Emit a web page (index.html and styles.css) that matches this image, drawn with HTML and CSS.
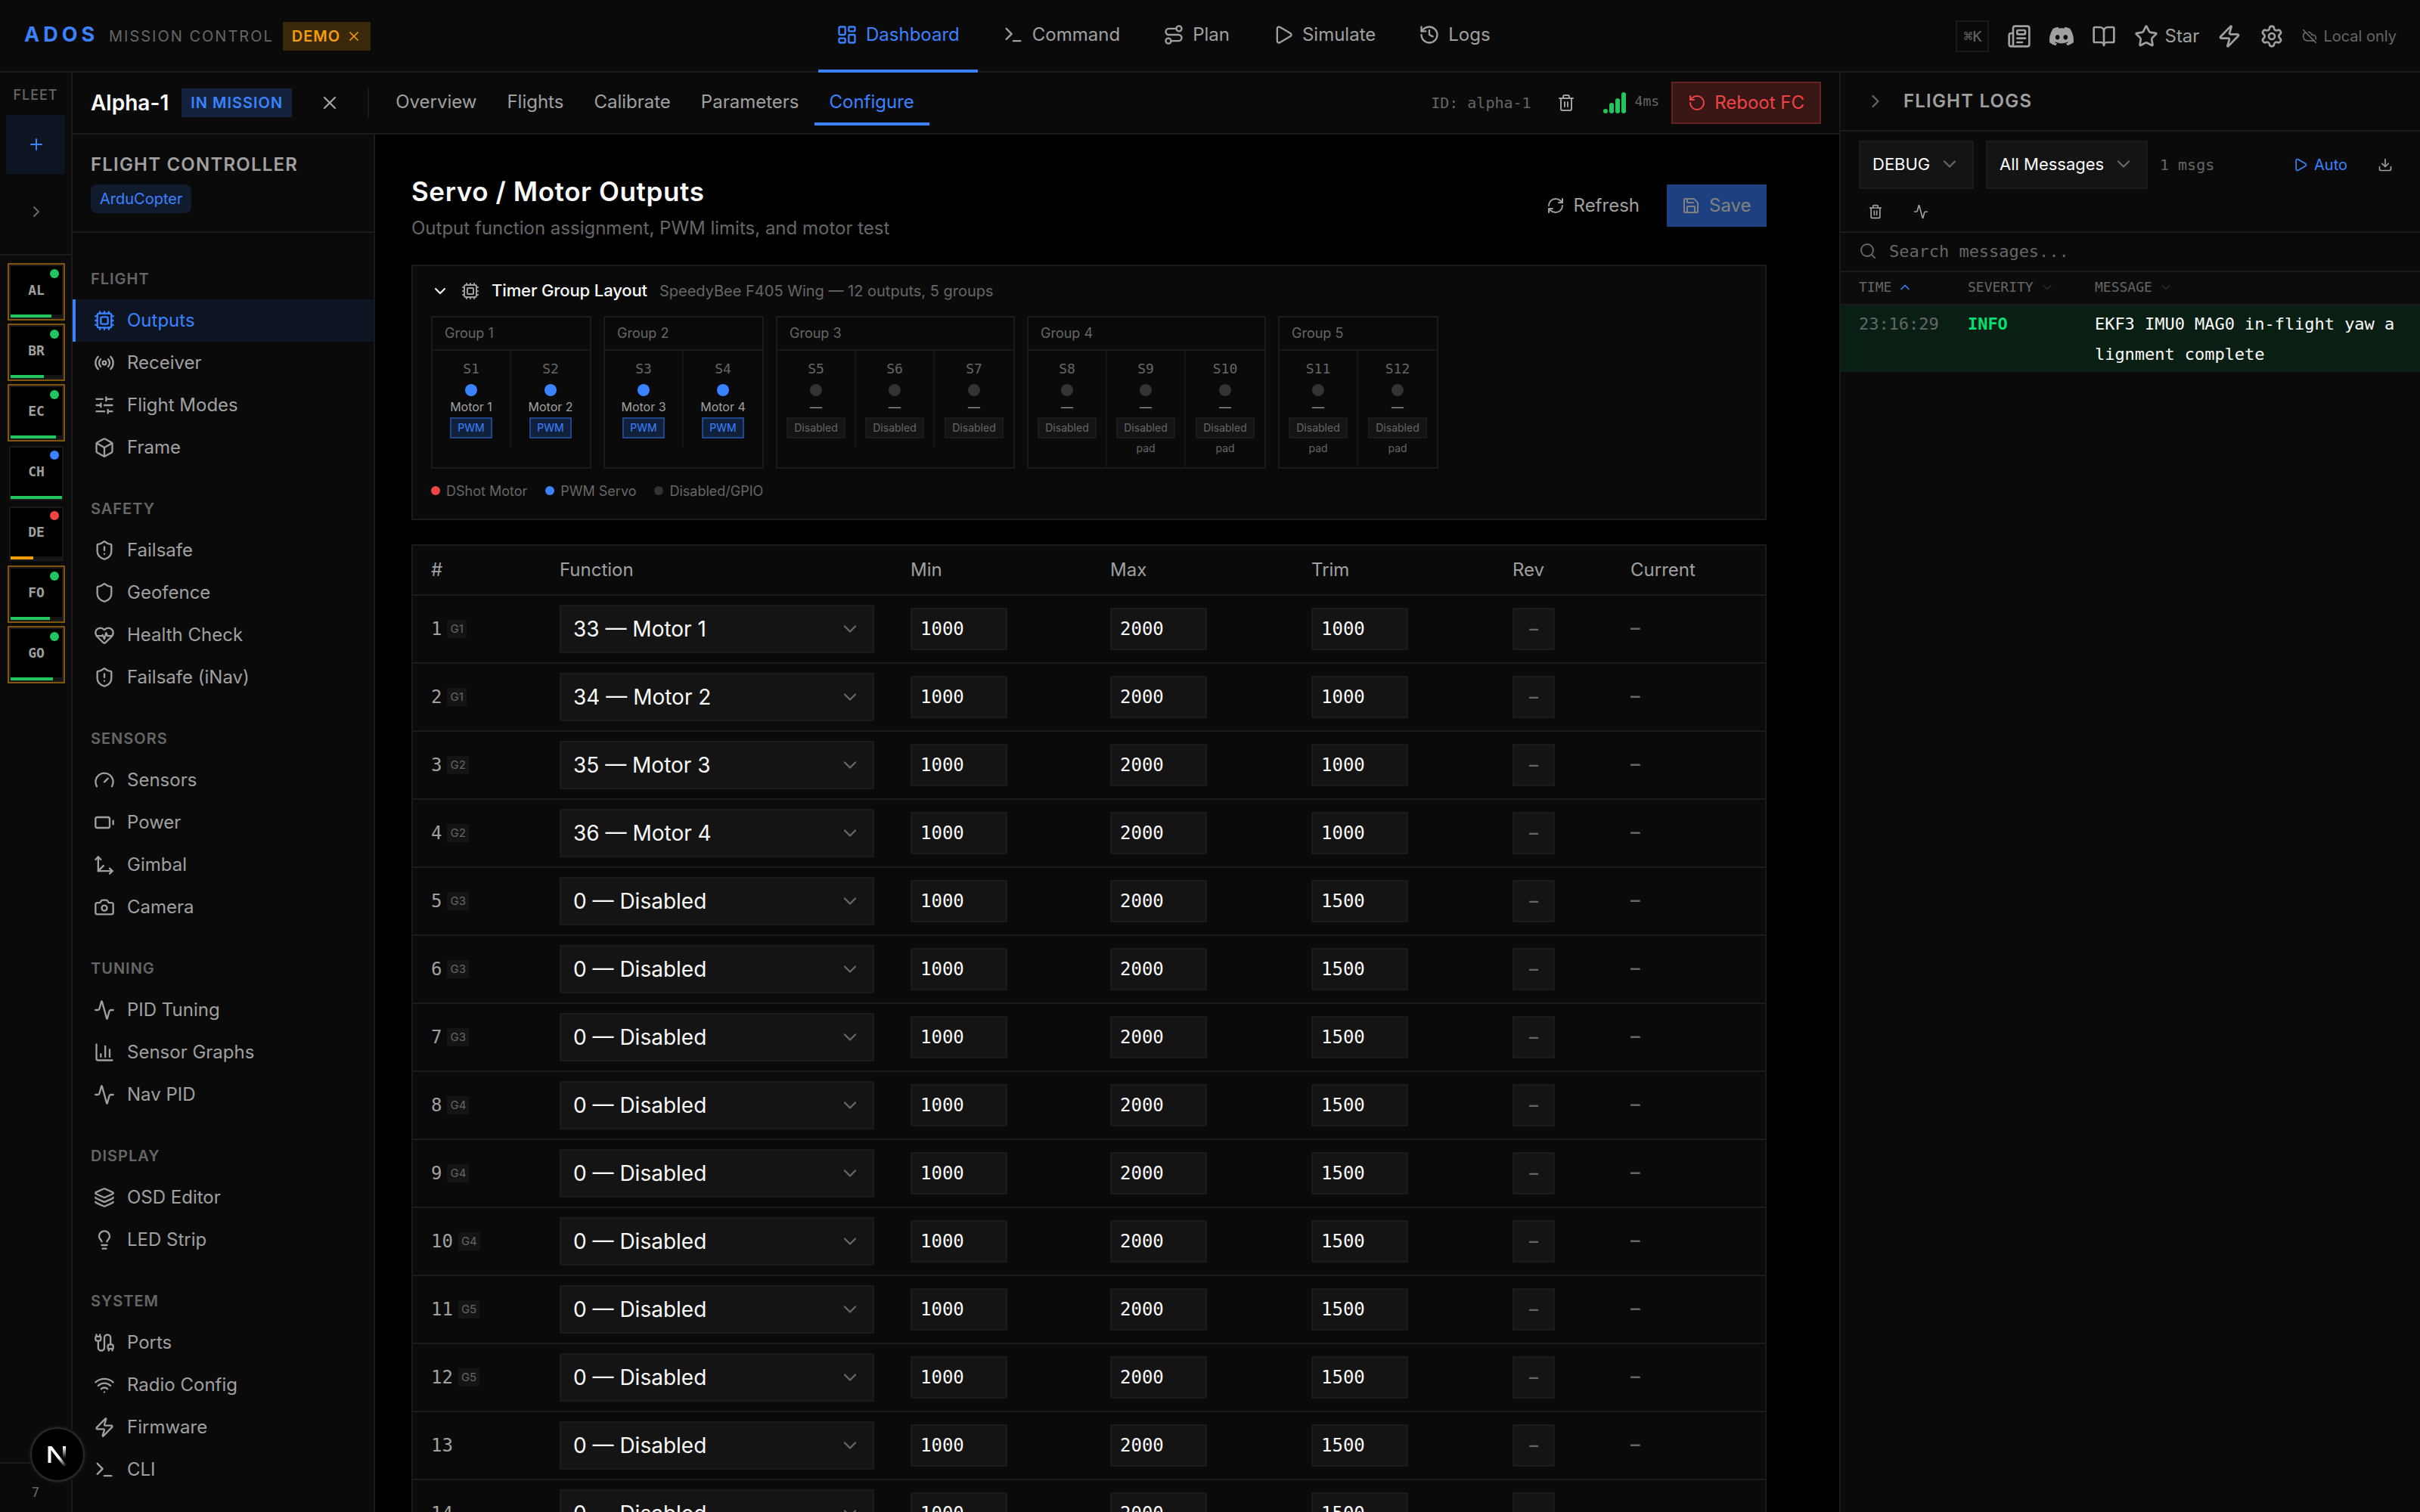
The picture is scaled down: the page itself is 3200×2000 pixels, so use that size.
FILE: index.html
```html
<!DOCTYPE html>
<html lang="en">
<head>
<meta charset="utf-8">
<title>ADOS Mission Control</title>
<link rel="stylesheet" href="styles.css">
</head>
<body>
<svg class="sprite" aria-hidden="true">
  <symbol id="dashboard" viewBox="0 0 24 24"><rect x="3" y="3" width="7" height="9" rx="1"/><rect x="14" y="3" width="7" height="5" rx="1"/><rect x="14" y="12" width="7" height="9" rx="1"/><rect x="3" y="16" width="7" height="5" rx="1"/></symbol>
  <symbol id="terminal" viewBox="0 0 24 24"><path d="m4 17 6-6-6-6"/><path d="M12 19h8"/></symbol>
  <symbol id="route" viewBox="0 0 24 24"><circle cx="6" cy="19" r="3"/><path d="M9 19h8.5a3.5 3.5 0 0 0 0-7h-11a3.5 3.5 0 0 1 0-7H15"/><circle cx="18" cy="5" r="3"/></symbol>
  <symbol id="play" viewBox="0 0 24 24"><path d="M5 5a2 2 0 0 1 3.008-1.728l11.997 6.998a2 2 0 0 1 .003 3.458l-12 7A2 2 0 0 1 5 19z"/></symbol>
  <symbol id="history" viewBox="0 0 24 24"><path d="M3 12a9 9 0 1 0 9-9 9.75 9.75 0 0 0-6.74 2.74L3 8"/><path d="M3 3v5h5"/><path d="M12 7v5l4 2"/></symbol>
  <symbol id="newspaper" viewBox="0 0 24 24"><path d="M15 18h-5"/><path d="M18 14h-8"/><path d="M4 22h16a2 2 0 0 0 2-2V4a2 2 0 0 0-2-2H8a2 2 0 0 0-2 2v16a2 2 0 0 1-4 0v-9a2 2 0 0 1 2-2h2"/><rect x="10" y="6" width="8" height="4" rx="1"/></symbol>
  <symbol id="discord" viewBox="0 0 24 24"><path d="M20.317 4.3698a19.7913 19.7913 0 00-4.8851-1.5152.0741.0741 0 00-.0785.0371c-.211.3753-.4447.8648-.6083 1.2495-1.8447-.2762-3.68-.2762-5.4868 0-.1636-.3933-.4058-.8742-.6177-1.2495a.077.077 0 00-.0785-.037 19.7363 19.7363 0 00-4.8852 1.515.0699.0699 0 00-.0321.0277C.5334 9.0458-.319 13.5799.0992 18.0578a.0824.0824 0 00.0312.0561c2.0528 1.5076 4.0413 2.4228 5.9929 3.0294a.0777.0777 0 00.0842-.0276c.4616-.6304.8731-1.2952 1.226-1.9942a.076.076 0 00-.0416-.1057c-.6528-.2476-1.2743-.5495-1.8722-.8923a.077.077 0 01-.0076-.1277c.1258-.0943.2517-.1923.3718-.2914a.0743.0743 0 01.0776-.0105c3.9278 1.7933 8.18 1.7933 12.0614 0a.0739.0739 0 01.0785.0095c.1202.099.246.1981.3728.2924a.077.077 0 01-.0066.1276 12.2986 12.2986 0 01-1.873.8914.0766.0766 0 00-.0407.1067c.3604.698.7719 1.3628 1.225 1.9932a.076.076 0 00.0842.0286c1.961-.6067 3.9495-1.5219 6.0023-3.0294a.077.077 0 00.0313-.0552c.5004-5.177-.8382-9.6739-3.5485-13.6604a.061.061 0 00-.0312-.0286zM8.02 15.3312c-1.1825 0-2.1569-1.0857-2.1569-2.419 0-1.3332.9555-2.4189 2.157-2.4189 1.2108 0 2.1757 1.0952 2.1568 2.419 0 1.3332-.9555 2.4189-2.1569 2.4189zm7.9748 0c-1.1825 0-2.1569-1.0857-2.1569-2.419 0-1.3332.9554-2.4189 2.1569-2.4189 1.2108 0 2.1757 1.0952 2.1568 2.419 0 1.3332-.946 2.4189-2.1568 2.4189Z"/></symbol>
  <symbol id="book" viewBox="0 0 24 24"><path d="M12 7v14"/><path d="M3 18a1 1 0 0 1-1-1V4a1 1 0 0 1 1-1h5a4 4 0 0 1 4 4 4 4 0 0 1 4-4h5a1 1 0 0 1 1 1v13a1 1 0 0 1-1 1h-6a3 3 0 0 0-3 3 3 3 0 0 0-3-3z"/></symbol>
  <symbol id="star" viewBox="0 0 24 24"><path d="M11.525 2.295a.53.53 0 0 1 .95 0l2.31 4.679a2.123 2.123 0 0 0 1.595 1.16l5.166.756a.53.53 0 0 1 .294.904l-3.736 3.638a2.123 2.123 0 0 0-.611 1.878l.882 5.14a.53.53 0 0 1-.771.56l-4.618-2.428a2.122 2.122 0 0 0-1.973 0L6.396 21.01a.53.53 0 0 1-.77-.56l.881-5.139a2.122 2.122 0 0 0-.611-1.879L2.16 9.795a.53.53 0 0 1 .294-.906l5.165-.755a2.122 2.122 0 0 0 1.597-1.16z"/></symbol>
  <symbol id="zap" viewBox="0 0 24 24"><path d="M4 14a1 1 0 0 1-.78-1.63l9.9-10.2a.5.5 0 0 1 .86.46l-1.92 6.02A1 1 0 0 0 13 10h7a1 1 0 0 1 .78 1.63l-9.9 10.2a.5.5 0 0 1-.86-.46l1.92-6.02A1 1 0 0 0 11 14z"/></symbol>
  <symbol id="settings" viewBox="0 0 24 24"><path d="M9.671 4.136a2.34 2.34 0 0 1 4.659 0 2.34 2.34 0 0 0 3.319 1.915 2.34 2.34 0 0 1 2.33 4.033 2.34 2.34 0 0 0 0 3.831 2.34 2.34 0 0 1-2.33 4.033 2.34 2.34 0 0 0-3.319 1.915 2.34 2.34 0 0 1-4.659 0 2.34 2.34 0 0 0-3.32-1.915 2.34 2.34 0 0 1-2.33-4.033 2.34 2.34 0 0 0 0-3.831A2.34 2.34 0 0 1 6.35 6.051a2.34 2.34 0 0 0 3.319-1.915"/><circle cx="12" cy="12" r="3"/></symbol>
  <symbol id="cloud-off" viewBox="0 0 24 24"><path d="m2 2 20 20"/><path d="M5.782 5.782A7 7 0 0 0 9 19h8.5a4.5 4.5 0 0 0 1.307-.193"/><path d="M21.532 16.5A4.5 4.5 0 0 0 17.5 10h-1.79A7.008 7.008 0 0 0 10 5.07"/></symbol>
  <symbol id="x" viewBox="0 0 24 24"><path d="M18 6 6 18"/><path d="m6 6 12 12"/></symbol>
  <symbol id="plus" viewBox="0 0 24 24"><path d="M5 12h14"/><path d="M12 5v14"/></symbol>
  <symbol id="chevron-right" viewBox="0 0 24 24"><path d="m9 18 6-6-6-6"/></symbol>
  <symbol id="chevron-down" viewBox="0 0 24 24"><path d="m6 9 6 6 6-6"/></symbol>
  <symbol id="chevron-up" viewBox="0 0 24 24"><path d="m18 15-6-6-6 6"/></symbol>
  <symbol id="cpu" viewBox="0 0 24 24"><path d="M12 20v2M12 2v2M17 20v2M17 2v2M2 12h2M2 17h2M2 7h2M20 12h2M20 17h2M20 7h2M7 20v2M7 2v2"/><rect x="4" y="4" width="16" height="16" rx="2"/><rect x="8" y="8" width="8" height="8" rx="1"/></symbol>
  <symbol id="radio" viewBox="0 0 24 24"><path d="M16.247 7.761a6 6 0 0 1 0 8.478"/><path d="M19.075 4.933a10 10 0 0 1 0 14.134"/><path d="M4.925 19.067a10 10 0 0 1 0-14.134"/><path d="M7.753 16.239a6 6 0 0 1 0-8.478"/><circle cx="12" cy="12" r="2"/></symbol>
  <symbol id="sliders" viewBox="0 0 24 24"><path d="M10 5H3M12 19H3M14 3v4M16 17v4M21 12h-9M21 19h-5M21 5h-7M8 10v4M8 12H3"/></symbol>
  <symbol id="box" viewBox="0 0 24 24"><path d="M21 8a2 2 0 0 0-1-1.73l-7-4a2 2 0 0 0-2 0l-7 4A2 2 0 0 0 3 8v8a2 2 0 0 0 1 1.73l7 4a2 2 0 0 0 2 0l7-4A2 2 0 0 0 21 16Z"/><path d="m3.3 7 8.7 5 8.7-5"/><path d="M12 22V12"/></symbol>
  <symbol id="shield" viewBox="0 0 24 24"><path d="M20 13c0 5-3.5 7.5-7.66 8.95a1 1 0 0 1-.67-.01C7.5 20.5 4 18 4 13V6a1 1 0 0 1 1-1c2 0 4.5-1.2 6.24-2.72a1.17 1.17 0 0 1 1.52 0C14.51 3.81 17 5 19 5a1 1 0 0 1 1 1z"/></symbol>
  <symbol id="shield-alert" viewBox="0 0 24 24"><path d="M20 13c0 5-3.5 7.5-7.66 8.95a1 1 0 0 1-.67-.01C7.5 20.5 4 18 4 13V6a1 1 0 0 1 1-1c2 0 4.5-1.2 6.24-2.72a1.17 1.17 0 0 1 1.52 0C14.51 3.81 17 5 19 5a1 1 0 0 1 1 1z"/><path d="M12 8v4M12 16h.01"/></symbol>
  <symbol id="heart-pulse" viewBox="0 0 24 24"><path d="M2 9.5a5.5 5.5 0 0 1 9.591-3.676.56.56 0 0 0 .818 0A5.49 5.49 0 0 1 22 9.5c0 2.29-1.5 4-3 5.5l-5.492 5.313a2 2 0 0 1-3 .019L5 15c-1.5-1.5-3-3.2-3-5.5"/><path d="M3.22 13H9.5l.5-1 2 4.5 2-7 1.5 3.5h5.27"/></symbol>
  <symbol id="gauge" viewBox="0 0 24 24"><path d="m12 14 4-4"/><path d="M3.34 19a10 10 0 1 1 17.32 0"/></symbol>
  <symbol id="battery" viewBox="0 0 24 24"><path d="M22 14v-4"/><rect x="2" y="6" width="16" height="12" rx="2"/></symbol>
  <symbol id="axes" viewBox="0 0 24 24"><path d="M5 3v16h16"/><path d="m5 19 6-6"/><path d="m2 6 3-3 3 3"/><path d="m18 16 3 3-3 3"/></symbol>
  <symbol id="camera" viewBox="0 0 24 24"><path d="M13.997 4a2 2 0 0 1 1.76 1.05l.486.9A2 2 0 0 0 18.003 7H20a2 2 0 0 1 2 2v9a2 2 0 0 1-2 2H4a2 2 0 0 1-2-2V9a2 2 0 0 1 2-2h1.997a2 2 0 0 0 1.759-1.048l.489-.904A2 2 0 0 1 10.004 4z"/><circle cx="12" cy="13" r="3"/></symbol>
  <symbol id="activity" viewBox="0 0 24 24"><path d="M22 12h-2.48a2 2 0 0 0-1.93 1.46l-2.35 8.36a.25.25 0 0 1-.48 0L9.24 2.18a.25.25 0 0 0-.48 0l-2.35 8.36A2 2 0 0 1 4.49 12H2"/></symbol>
  <symbol id="chart" viewBox="0 0 24 24"><path d="M3 3v16a2 2 0 0 0 2 2h16"/><path d="M18 17V9M13 17V5M8 17v-3"/></symbol>
  <symbol id="layers" viewBox="0 0 24 24"><path d="M12.83 2.18a2 2 0 0 0-1.66 0L2.6 6.08a1 1 0 0 0 0 1.83l8.58 3.91a2 2 0 0 0 1.66 0l8.58-3.9a1 1 0 0 0 0-1.83z"/><path d="M2 12a1 1 0 0 0 .58.91l8.6 3.91a2 2 0 0 0 1.65 0l8.58-3.9A1 1 0 0 0 22 12"/><path d="M2 17a1 1 0 0 0 .58.91l8.6 3.91a2 2 0 0 0 1.65 0l8.58-3.9A1 1 0 0 0 22 17"/></symbol>
  <symbol id="bulb" viewBox="0 0 24 24"><path d="M15 14c.2-1 .7-1.7 1.5-2.5 1-.9 1.5-2.2 1.5-3.5A6 6 0 0 0 6 8c0 1 .2 2.2 1.5 3.5.7.7 1.3 1.5 1.5 2.5"/><path d="M9 18h6M10 22h4"/></symbol>
  <symbol id="cable" viewBox="0 0 24 24"><path d="M17 19a1 1 0 0 1-1-1v-2a2 2 0 0 1 2-2h2a2 2 0 0 1 2 2v2a1 1 0 0 1-1 1z"/><path d="M17 21v-2"/><path d="M19 14V6.5a1 1 0 0 0-7 0v11a1 1 0 0 1-7 0V10"/><path d="M21 21v-2"/><path d="M3 5V3"/><path d="M4 10a2 2 0 0 1-2-2V6a1 1 0 0 1 1-1h4a1 1 0 0 1 1 1v2a2 2 0 0 1-2 2z"/><path d="M7 5V3"/></symbol>
  <symbol id="wifi" viewBox="0 0 24 24"><path d="M12 20h.01"/><path d="M2 8.82a15 15 0 0 1 20 0"/><path d="M5 12.859a10 10 0 0 1 14 0"/><path d="M8.5 16.429a5 5 0 0 1 7 0"/></symbol>
  <symbol id="rotate" viewBox="0 0 24 24"><path d="M3 12a9 9 0 1 0 9-9 9.75 9.75 0 0 0-6.74 2.74L3 8"/><path d="M3 3v5h5"/></symbol>
  <symbol id="refresh" viewBox="0 0 24 24"><path d="M3 12a9 9 0 0 1 9-9 9.75 9.75 0 0 1 6.74 2.74L21 8"/><path d="M21 3v5h-5"/><path d="M21 12a9 9 0 0 1-9 9 9.75 9.75 0 0 1-6.74-2.74L3 16"/><path d="M8 16H3v5"/></symbol>
  <symbol id="save" viewBox="0 0 24 24"><path d="M15.2 3a2 2 0 0 1 1.4.6l3.8 3.8a2 2 0 0 1 .6 1.4V19a2 2 0 0 1-2 2H5a2 2 0 0 1-2-2V5a2 2 0 0 1 2-2z"/><path d="M17 21v-7a1 1 0 0 0-1-1H8a1 1 0 0 0-1 1v7"/><path d="M7 3v4a1 1 0 0 0 1 1h7"/></symbol>
  <symbol id="trash" viewBox="0 0 24 24"><path d="M10 11v6M14 11v6"/><path d="M19 6v14a2 2 0 0 1-2 2H7a2 2 0 0 1-2-2V6"/><path d="M3 6h18"/><path d="M8 6V4a2 2 0 0 1 2-2h4a2 2 0 0 1 2 2v2"/></symbol>
  <symbol id="download" viewBox="0 0 24 24"><path d="M12 15V3"/><path d="M21 15v4a2 2 0 0 1-2 2H5a2 2 0 0 1-2-2v-4"/><path d="m7 10 5 5 5-5"/></symbol>
  <symbol id="search" viewBox="0 0 24 24"><path d="m21 21-4.34-4.34"/><circle cx="11" cy="11" r="8"/></symbol>
</svg>

<div class="app">
  <header class="topbar">
    <div class="brand">
      <span class="logo">ADOS</span>
      <span class="product">MISSION CONTROL</span>
      <span class="demo">DEMO<svg class="icon i20"><use href="#x"/></svg></span>
    </div>
    <nav class="main-nav">
      <a class="nav-item active"><svg class="icon i28"><use href="#dashboard"/></svg>Dashboard</a>
      <a class="nav-item"><svg class="icon i28"><use href="#terminal"/></svg>Command</a>
      <a class="nav-item"><svg class="icon i28"><use href="#route"/></svg>Plan</a>
      <a class="nav-item"><svg class="icon i28"><use href="#play"/></svg>Simulate</a>
      <a class="nav-item"><svg class="icon i28"><use href="#history"/></svg>Logs</a>
    </nav>
    <div class="top-actions">
      <span class="kbd">⌘K</span>
      <svg class="icon i32"><use href="#newspaper"/></svg>
      <svg class="icon i32 solid"><use href="#discord"/></svg>
      <svg class="icon i32"><use href="#book"/></svg>
      <span class="star"><svg class="icon i32"><use href="#star"/></svg>Star</span>
      <svg class="icon i32"><use href="#zap"/></svg>
      <svg class="icon i32"><use href="#settings"/></svg>
      <span class="local"><svg class="icon i20"><use href="#cloud-off"/></svg>Local only</span>
    </div>
  </header>

  <div class="workspace">
    <aside class="fleet">
      <div class="fleet-head">
        <span class="fleet-title">FLEET</span>
        <div class="fleet-add"><svg class="icon i24"><use href="#plus"/></svg></div>
        <div class="fleet-expand"><svg class="icon i24"><use href="#chevron-right"/></svg></div>
      </div>
      <div class="fleet-list">
        <div class="drone ring"><i class="dot green"></i>AL<div class="bar"><b class="green" style="width:79%"></b></div></div>
        <div class="drone ring"><i class="dot green"></i>BR<div class="bar"><b class="green" style="width:65%"></b></div></div>
        <div class="drone ring"><i class="dot green"></i>EC<div class="bar"><b class="green" style="width:88%"></b></div></div>
        <div class="drone"><i class="dot blue"></i>CH<div class="bar"><b class="green" style="width:100%"></b></div></div>
        <div class="drone"><i class="dot red"></i>DE<div class="bar"><b class="amber" style="width:44%"></b></div></div>
        <div class="drone ring"><i class="dot green"></i>FO<div class="bar"><b class="green" style="width:76%"></b></div></div>
        <div class="drone ring"><i class="dot green"></i>GO<div class="bar"><b class="green" style="width:82%"></b></div></div>
      </div>
      <div class="fleet-count">7</div>
    </aside>

    <section class="detail">
      <div class="detail-bar">
        <span class="drone-name">Alpha-1</span>
        <span class="status">IN MISSION</span>
        <svg class="icon i28 close"><use href="#x"/></svg>
        <span class="vsep"></span>
        <nav class="tabs">
          <a class="tab">Overview</a><a class="tab">Flights</a><a class="tab">Calibrate</a><a class="tab">Parameters</a><a class="tab active">Configure</a>
        </nav>
        <div class="detail-actions">
          <span class="drone-id">ID: alpha-1</span>
          <svg class="icon i24"><use href="#trash"/></svg>
          <span class="link"><span class="signal"><i class="s1"></i><i class="s2"></i><i class="s3"></i><i class="s4"></i></span><span class="ping">4ms</span></span>
          <span class="reboot"><svg class="icon i24"><use href="#rotate"/></svg>Reboot FC</span>
        </div>
      </div>

      <div class="detail-body">
        <aside class="sidebar">
          <div class="side-head">
            <div class="side-title">FLIGHT CONTROLLER</div>
            <span class="firmware">ArduCopter</span>
          </div>
          <nav class="side-nav">
            <h4>FLIGHT</h4>
            <a class="active"><svg class="icon i28"><use href="#cpu"/></svg>Outputs</a>
            <a><svg class="icon i28"><use href="#radio"/></svg>Receiver</a>
            <a><svg class="icon i28"><use href="#sliders"/></svg>Flight Modes</a>
            <a><svg class="icon i28"><use href="#box"/></svg>Frame</a>
            <h4>SAFETY</h4>
            <a><svg class="icon i28"><use href="#shield-alert"/></svg>Failsafe</a>
            <a><svg class="icon i28"><use href="#shield"/></svg>Geofence</a>
            <a><svg class="icon i28"><use href="#heart-pulse"/></svg>Health Check</a>
            <a><svg class="icon i28"><use href="#shield-alert"/></svg>Failsafe (iNav)</a>
            <h4>SENSORS</h4>
            <a><svg class="icon i28"><use href="#gauge"/></svg>Sensors</a>
            <a><svg class="icon i28"><use href="#battery"/></svg>Power</a>
            <a><svg class="icon i28"><use href="#axes"/></svg>Gimbal</a>
            <a><svg class="icon i28"><use href="#camera"/></svg>Camera</a>
            <h4>TUNING</h4>
            <a><svg class="icon i28"><use href="#activity"/></svg>PID Tuning</a>
            <a><svg class="icon i28"><use href="#chart"/></svg>Sensor Graphs</a>
            <a><svg class="icon i28"><use href="#activity"/></svg>Nav PID</a>
            <h4>DISPLAY</h4>
            <a><svg class="icon i28"><use href="#layers"/></svg>OSD Editor</a>
            <a><svg class="icon i28"><use href="#bulb"/></svg>LED Strip</a>
            <h4>SYSTEM</h4>
            <a><svg class="icon i28"><use href="#cable"/></svg>Ports</a>
            <a><svg class="icon i28"><use href="#wifi"/></svg>Radio Config</a>
            <a><svg class="icon i28"><use href="#zap"/></svg>Firmware</a>
            <a><svg class="icon i28"><use href="#terminal"/></svg>CLI</a>
          </nav>
        </aside>

        <main class="content">
          <div class="page-head">
            <div>
              <h1>Servo / Motor Outputs</h1>
              <p>Output function assignment, PWM limits, and motor test</p>
            </div>
            <div class="page-actions">
              <span class="btn"><svg class="icon i24"><use href="#refresh"/></svg>Refresh</span>
              <span class="btn primary"><svg class="icon i24"><use href="#save"/></svg>Save</span>
            </div>
          </div>

          <section class="timer">
            <div class="timer-head">
              <svg class="icon i24 bright"><use href="#chevron-down"/></svg>
              <svg class="icon i24"><use href="#cpu"/></svg>
              <span class="timer-title">Timer Group Layout</span>
              <span class="timer-sub">SpeedyBee F405 Wing — 12 outputs, 5 groups</span>
            </div>
            <div class="groups">
              <div class="group">
                <div class="group-name">Group 1</div>
                <div class="cells">
                  <div class="cell"><span class="ch">S1</span><i class="blue"></i><span class="fn">Motor 1</span><span class="tag pwm">PWM</span></div>
                  <div class="cell"><span class="ch">S2</span><i class="blue"></i><span class="fn">Motor 2</span><span class="tag pwm">PWM</span></div>
                </div>
              </div>
              <div class="group">
                <div class="group-name">Group 2</div>
                <div class="cells">
                  <div class="cell"><span class="ch">S3</span><i class="blue"></i><span class="fn">Motor 3</span><span class="tag pwm">PWM</span></div>
                  <div class="cell"><span class="ch">S4</span><i class="blue"></i><span class="fn">Motor 4</span><span class="tag pwm">PWM</span></div>
                </div>
              </div>
              <div class="group">
                <div class="group-name">Group 3</div>
                <div class="cells">
                  <div class="cell"><span class="ch">S5</span><i class="off"></i><span class="fn">—</span><span class="tag">Disabled</span></div>
                  <div class="cell"><span class="ch">S6</span><i class="off"></i><span class="fn">—</span><span class="tag">Disabled</span></div>
                  <div class="cell"><span class="ch">S7</span><i class="off"></i><span class="fn">—</span><span class="tag">Disabled</span></div>
                </div>
              </div>
              <div class="group">
                <div class="group-name">Group 4</div>
                <div class="cells">
                  <div class="cell"><span class="ch">S8</span><i class="off"></i><span class="fn">—</span><span class="tag">Disabled</span></div>
                  <div class="cell"><span class="ch">S9</span><i class="off"></i><span class="fn">—</span><span class="tag">Disabled</span><span class="pad">pad</span></div>
                  <div class="cell"><span class="ch">S10</span><i class="off"></i><span class="fn">—</span><span class="tag">Disabled</span><span class="pad">pad</span></div>
                </div>
              </div>
              <div class="group">
                <div class="group-name">Group 5</div>
                <div class="cells">
                  <div class="cell"><span class="ch">S11</span><i class="off"></i><span class="fn">—</span><span class="tag">Disabled</span><span class="pad">pad</span></div>
                  <div class="cell"><span class="ch">S12</span><i class="off"></i><span class="fn">—</span><span class="tag">Disabled</span><span class="pad">pad</span></div>
                </div>
              </div>
            </div>
            <div class="legend">
              <span><i class="red"></i>DShot Motor</span>
              <span><i class="blue"></i>PWM Servo</span>
              <span><i class="off"></i>Disabled/GPIO</span>
            </div>
          </section>

          <table class="outputs">
            <colgroup><col class="c-num"><col class="c-fn"><col class="c-val"><col class="c-val2"><col class="c-val2"><col class="c-rev"><col></colgroup>
            <thead><tr><th>#</th><th>Function</th><th>Min</th><th>Max</th><th>Trim</th><th>Rev</th><th>Current</th></tr></thead>
            <tbody>
              <tr><td class="num">1<em>G1</em></td><td><div class="select">33 — Motor 1<svg class="icon i28"><use href="#chevron-down"/></svg></div></td><td><div class="field">1000</div></td><td><div class="field">2000</div></td><td><div class="field">1000</div></td><td><div class="rev">–</div></td><td class="cur">–</td></tr>
              <tr><td class="num">2<em>G1</em></td><td><div class="select">34 — Motor 2<svg class="icon i28"><use href="#chevron-down"/></svg></div></td><td><div class="field">1000</div></td><td><div class="field">2000</div></td><td><div class="field">1000</div></td><td><div class="rev">–</div></td><td class="cur">–</td></tr>
              <tr><td class="num">3<em>G2</em></td><td><div class="select">35 — Motor 3<svg class="icon i28"><use href="#chevron-down"/></svg></div></td><td><div class="field">1000</div></td><td><div class="field">2000</div></td><td><div class="field">1000</div></td><td><div class="rev">–</div></td><td class="cur">–</td></tr>
              <tr><td class="num">4<em>G2</em></td><td><div class="select">36 — Motor 4<svg class="icon i28"><use href="#chevron-down"/></svg></div></td><td><div class="field">1000</div></td><td><div class="field">2000</div></td><td><div class="field">1000</div></td><td><div class="rev">–</div></td><td class="cur">–</td></tr>
              <tr><td class="num">5<em>G3</em></td><td><div class="select">0 — Disabled<svg class="icon i28"><use href="#chevron-down"/></svg></div></td><td><div class="field">1000</div></td><td><div class="field">2000</div></td><td><div class="field">1500</div></td><td><div class="rev">–</div></td><td class="cur">–</td></tr>
              <tr><td class="num">6<em>G3</em></td><td><div class="select">0 — Disabled<svg class="icon i28"><use href="#chevron-down"/></svg></div></td><td><div class="field">1000</div></td><td><div class="field">2000</div></td><td><div class="field">1500</div></td><td><div class="rev">–</div></td><td class="cur">–</td></tr>
              <tr><td class="num">7<em>G3</em></td><td><div class="select">0 — Disabled<svg class="icon i28"><use href="#chevron-down"/></svg></div></td><td><div class="field">1000</div></td><td><div class="field">2000</div></td><td><div class="field">1500</div></td><td><div class="rev">–</div></td><td class="cur">–</td></tr>
              <tr><td class="num">8<em>G4</em></td><td><div class="select">0 — Disabled<svg class="icon i28"><use href="#chevron-down"/></svg></div></td><td><div class="field">1000</div></td><td><div class="field">2000</div></td><td><div class="field">1500</div></td><td><div class="rev">–</div></td><td class="cur">–</td></tr>
              <tr><td class="num">9<em>G4</em></td><td><div class="select">0 — Disabled<svg class="icon i28"><use href="#chevron-down"/></svg></div></td><td><div class="field">1000</div></td><td><div class="field">2000</div></td><td><div class="field">1500</div></td><td><div class="rev">–</div></td><td class="cur">–</td></tr>
              <tr><td class="num">10<em>G4</em></td><td><div class="select">0 — Disabled<svg class="icon i28"><use href="#chevron-down"/></svg></div></td><td><div class="field">1000</div></td><td><div class="field">2000</div></td><td><div class="field">1500</div></td><td><div class="rev">–</div></td><td class="cur">–</td></tr>
              <tr><td class="num">11<em>G5</em></td><td><div class="select">0 — Disabled<svg class="icon i28"><use href="#chevron-down"/></svg></div></td><td><div class="field">1000</div></td><td><div class="field">2000</div></td><td><div class="field">1500</div></td><td><div class="rev">–</div></td><td class="cur">–</td></tr>
              <tr><td class="num">12<em>G5</em></td><td><div class="select">0 — Disabled<svg class="icon i28"><use href="#chevron-down"/></svg></div></td><td><div class="field">1000</div></td><td><div class="field">2000</div></td><td><div class="field">1500</div></td><td><div class="rev">–</div></td><td class="cur">–</td></tr>
              <tr><td class="num">13</td><td><div class="select">0 — Disabled<svg class="icon i28"><use href="#chevron-down"/></svg></div></td><td><div class="field">1000</div></td><td><div class="field">2000</div></td><td><div class="field">1500</div></td><td><div class="rev">–</div></td><td class="cur">–</td></tr>
              <tr><td class="num">14</td><td><div class="select">0 — Disabled<svg class="icon i28"><use href="#chevron-down"/></svg></div></td><td><div class="field">1000</div></td><td><div class="field">2000</div></td><td><div class="field">1500</div></td><td><div class="rev">–</div></td><td class="cur">–</td></tr>
            </tbody>
          </table>
        </main>
      </div>
    </section>

    <aside class="logs">
      <div class="logs-head"><svg class="icon i28"><use href="#chevron-right"/></svg>FLIGHT LOGS</div>
      <div class="logs-tools">
        <div class="tools-row">
          <div class="select small w-level">DEBUG<svg class="icon i28"><use href="#chevron-down"/></svg></div>
          <div class="select small w-filter">All Messages<svg class="icon i28"><use href="#chevron-down"/></svg></div>
          <span class="msgs">1 msgs</span>
          <span class="auto"><svg class="icon i20"><use href="#play"/></svg>Auto</span>
          <span class="tool"><svg class="icon i20"><use href="#download"/></svg></span>
        </div>
        <div class="tools-row">
          <span class="tool"><svg class="icon i20"><use href="#trash"/></svg></span>
          <span class="tool"><svg class="icon i20"><use href="#activity"/></svg></span>
        </div>
      </div>
      <div class="logs-search"><svg class="icon i24"><use href="#search"/></svg>Search messages...</div>
      <div class="log-row log-cols">
        <span class="sorted">TIME<svg class="icon i20"><use href="#chevron-up"/></svg></span>
        <span>SEVERITY<svg class="icon i20"><use href="#chevron-down"/></svg></span>
        <span>MESSAGE<svg class="icon i20"><use href="#chevron-down"/></svg></span>
      </div>
      <div class="log-row log-entry">
        <span class="time">23:16:29</span>
        <span class="sev">INFO</span>
        <span class="msg">EKF3 IMU0 MAG0 in-flight yaw alignment complete</span>
      </div>
    </aside>
  </div>

  <div class="dev-badge">
    <svg viewBox="0 0 28 30" width="28" height="30">
      <defs>
        <linearGradient id="fade-diag" gradientUnits="userSpaceOnUse" x1="16" y1="17" x2="25" y2="29"><stop offset="0" stop-color="#fff"/><stop offset="1" stop-color="#fff" stop-opacity="0"/></linearGradient>
        <linearGradient id="fade-bar" gradientUnits="userSpaceOnUse" x1="0" y1="3" x2="0" y2="18"><stop offset="0" stop-color="#fff"/><stop offset="1" stop-color="#fff" stop-opacity="0"/></linearGradient>
      </defs>
      <path d="M1.5 2h4v22h-4z" fill="#fff"/>
      <path d="M1.5 2h5L26 27.2l-3.2 2z" fill="url(#fade-diag)"/>
      <path d="M21 2h4v16h-4z" fill="url(#fade-bar)"/>
    </svg>
  </div>
</div>
</body>
</html>
```
FILE: styles.css
```css
:root {
  --bg: #000;
  --panel: #0a0a0a;
  --raised: #141414;
  --line: #1a1a1a;
  --text: #fafafa;
  --muted: #a0a0a0;
  --dim: #666;
  --accent: #3a82ff;
  --green: #22c55e;
  --red: #ef4444;
  --amber: #f59e0b;
  --sans: Inter, "Liberation Sans", sans-serif;
  --mono: "DejaVu Sans Mono", "Liberation Mono", monospace;
}
* { box-sizing: border-box; }
html, body { margin: 0; height: 100%; overflow: hidden; background: var(--bg); }
body { font-family: var(--sans); font-size: 24px; line-height: 1.5; color: var(--text); }
h1, h4, p { margin: 0; }
i, em { font-style: normal; }

.sprite { display: none; }
.icon { flex: none; display: block; fill: none; stroke: currentColor; stroke-width: 2; stroke-linecap: round; stroke-linejoin: round; }
.icon.solid { fill: currentColor; stroke: none; }
.i20 { width: 20px; height: 20px; }
.i24 { width: 24px; height: 24px; }
.i28 { width: 28px; height: 28px; }
.i32 { width: 32px; height: 32px; }
.green { background: var(--green); }
.blue { background: var(--accent); }
.red { background: var(--red); }
.amber { background: var(--amber); }
.off { background: #333; }

.app { width: 3200px; height: 2000px; display: flex; flex-direction: column; position: relative; overflow: hidden; }

/* Top bar */
.topbar { flex: none; height: 96px; display: grid; grid-template-columns: 1082px auto 1fr; background: var(--panel); border-bottom: 2px solid var(--line); }
.brand { display: flex; align-items: baseline; padding: 25px 0 0 32px; }
.logo { font-size: 27px; font-weight: 700; letter-spacing: 5px; color: var(--accent); line-height: 42px; width: 112px; }
.product { font-size: 20px; letter-spacing: 2px; color: var(--dim); line-height: 30px; }
.demo { display: flex; align-items: center; gap: 8px; margin-left: 12px; padding: 4px 12px; font-size: 20px; line-height: 30px; font-weight: 600; letter-spacing: 1px; color: var(--amber); background: rgba(245, 158, 11, .2); }
.main-nav { display: flex; gap: 9px; height: 96px; }
.nav-item { display: flex; align-items: center; gap: 11px; padding: 0 24px; color: var(--muted); border-bottom: 4px solid transparent; }
.nav-item.active { color: var(--accent); border-color: var(--accent); }
.top-actions { display: flex; align-items: center; justify-content: flex-end; gap: 24px; padding-right: 31px; color: var(--muted); }
.kbd { height: 42px; width: 44px; border: 2px solid var(--line); font: 20px/38px var(--mono); letter-spacing: -.1px; text-align: center; color: var(--dim); }
.star, .local { display: flex; align-items: center; gap: 8px; }
.local { font-size: 20px; color: var(--dim); }

.workspace { flex: 1; min-height: 0; display: grid; grid-template-columns: 96px 2336px 768px; }

/* Fleet rail */
.fleet { display: flex; flex-direction: column; background: var(--panel); border-right: 2px solid var(--line); }
.fleet-head { height: 242px; padding: 16px 8px 0; border-bottom: 2px solid var(--line); text-align: center; }
.fleet-title { display: block; height: 40px; font-size: 18px; line-height: 27px; font-weight: 500; letter-spacing: 1px; color: var(--dim); }
.fleet-add, .fleet-expand { height: 78px; display: flex; align-items: center; justify-content: center; padding-left: 2px; }
.fleet-add { background: rgba(58, 130, 255, .1); color: var(--accent); }
.fleet-expand { height: 100px; color: var(--dim); }
.fleet-list { flex: 1; display: flex; flex-direction: column; gap: 8px; padding: 12px 0 0 12px; }
.drone { position: relative; width: 72px; height: 72px; border: 2px solid var(--line); background: #000; font: bold 18px/64px var(--mono); text-align: center; color: var(--muted); }
.drone.ring { box-shadow: 0 0 0 2px rgba(245, 158, 11, .5); }
.drone .dot { position: absolute; top: 4px; right: 4px; width: 12px; height: 12px; border-radius: 50%; }
.drone .bar { position: absolute; left: 0; right: 0; bottom: 0; height: 4px; background: var(--raised); }
.drone .bar b { display: block; height: 4px; }
.fleet-count { height: 66px; padding-top: 12px; border-top: 2px solid var(--line); font: 18px/52px var(--mono); text-align: center; color: var(--dim); }

/* Vehicle bar */
.detail { display: flex; flex-direction: column; min-width: 0; min-height: 0; }
.detail-bar { flex: none; height: 82px; display: flex; align-items: center; padding: 0 24px; background: var(--panel); border-bottom: 2px solid var(--line); }
.drone-name { font-size: 28px; font-weight: 600; }
.status { margin-left: 17px; padding: 4px 12px; font-size: 20px; line-height: 30px; font-weight: 600; letter-spacing: 1px; color: var(--accent); background: rgba(58, 130, 255, .2); }
.close { margin: 0 36px; color: var(--muted); }
.vsep { width: 2px; height: 40px; background: var(--line); }
.tabs { display: flex; margin-left: 15px; }
.tab { height: 60px; padding: 0 20px; line-height: 58px; color: var(--muted); }
.tab.active { color: var(--accent); box-shadow: inset 0 -4px var(--accent); }
.detail-actions { margin-left: auto; display: flex; align-items: center; color: var(--muted); }
.drone-id { margin-right: 34px; font: 20px/30px var(--mono); color: var(--dim); }
.link { display: flex; align-items: flex-start; margin: 0 16px 0 37px; }
.signal { display: flex; align-items: flex-end; gap: 2px; height: 28px; margin-right: 12px; }
.signal i { width: 6px; border-radius: 3px; background: var(--green); }
.signal .s1 { height: 6px; }
.signal .s2 { height: 14px; }
.signal .s3 { height: 20px; }
.signal .s4 { height: 28px; }
.ping { font: 18px/24px var(--mono); color: var(--dim); }
.reboot { display: flex; align-items: center; gap: 11px; height: 56px; padding: 0 20px; border: 2px solid rgba(239, 68, 68, .4); color: var(--red); background: rgba(239, 68, 68, .2); background-clip: padding-box; }

/* Section menu */
.detail-body { flex: 1; min-height: 0; display: grid; grid-template-columns: 400px 1fr; }
.sidebar { min-height: 0; overflow: hidden; background: var(--panel); border-right: 2px solid var(--line); }
.side-head { height: 130px; padding: 22px 24px 0; border-bottom: 2px solid var(--line); }
.side-title { font-weight: 600; letter-spacing: 1.2px; color: var(--muted); line-height: 36px; margin-bottom: 8px; }
.firmware { display: inline-block; vertical-align: top; padding: 4px 12px; border-radius: 8px; font-size: 20px; line-height: 30px; color: var(--accent); background: rgba(58, 130, 255, .15); }
.side-nav { padding-top: 8px; }
.side-nav h4 { height: 80px; padding: 38px 24px 0; font-size: 20px; line-height: 30px; font-weight: 600; letter-spacing: 1px; color: var(--dim); }
.side-nav a { display: flex; align-items: center; gap: 16px; height: 56px; padding-left: 24px; border-left: 4px solid transparent; color: var(--muted); }
.side-nav a.active { color: var(--accent); border-color: var(--accent); background: rgba(58, 130, 255, .1); }

/* Outputs page */
.content { min-height: 0; overflow: hidden; padding: 48px 96px 0 48px; background: var(--bg); }
.page-head { height: 92px; display: flex; justify-content: space-between; align-items: center; margin-bottom: 32px; }
.page-head > div:first-child { height: 92px; }
.page-head h1 { font-size: 35px; line-height: 54px; font-weight: 600; letter-spacing: .6px; }
.page-head p { margin-top: 4px; line-height: 36px; color: var(--dim); }
.page-actions { display: flex; gap: 16px; }
.btn { display: flex; align-items: center; gap: 12px; height: 56px; padding: 0 20px; color: var(--muted); }
.btn.primary { width: 132px; color: #fff; background: var(--accent); opacity: .5; }

.timer { height: 338px; margin-bottom: 32px; padding: 0 24px; border: 2px solid var(--line); background: var(--panel); }
.timer-head { display: flex; align-items: center; gap: 16px; height: 65px; margin-bottom: 1px; color: var(--muted); }
.bright { color: var(--text); }
.timer-title { font-size: 22px; font-weight: 500; letter-spacing: -.12px; color: var(--text); }
.timer-sub { font-size: 20px; color: var(--dim); }
.groups { display: flex; gap: 16px; height: 202px; }
.group { border: 2px solid var(--line); }
.group-name { height: 44px; padding: 0 16px; border-bottom: 2px solid var(--line); font-size: 18px; line-height: 42px; color: var(--dim); }
.cells { display: flex; }
.cell { width: 104px; padding: 12px 0; display: flex; flex-direction: column; align-items: center; border-right: 2px solid var(--raised); }
.cell:last-child { border-right: 0; }
.ch { font: 18px/24px var(--mono); color: var(--dim); }
.cell i { width: 16px; height: 16px; margin: 8px 0 4px; border-radius: 50%; }
.fn { font-size: 16px; line-height: 20px; color: var(--muted); }
.tag { height: 28px; margin-top: 4px; padding: 0 8px; border: 2px solid var(--line); background: var(--raised); font-size: 14px; line-height: 24px; color: var(--dim); }
.tag.pwm { color: var(--accent); background: #12213b; border-color: #22468a; }
.pad { height: 22px; margin-top: 4px; font-size: 14px; line-height: 18px; color: var(--dim); }
.legend { display: flex; gap: 24px; margin-top: 16px; font-size: 18px; line-height: 27px; color: var(--dim); }
.legend span { display: flex; align-items: center; gap: 8px; }
.legend i { width: 12px; height: 12px; margin-bottom: 2px; border-radius: 50%; }

.outputs { width: 1792px; table-layout: fixed; border-collapse: separate; border-spacing: 0; border: 2px solid var(--line); background: var(--panel); }
.c-num { width: 170px; }
.c-fn { width: 464px; }
.c-val { width: 264px; }
.c-val2 { width: 266px; }
.c-rev { width: 156px; }
.outputs th { height: 66px; padding: 0 0 0 24px; text-align: left; font-weight: 400; color: var(--muted); border-bottom: 2px solid var(--line); }
.outputs td { height: 90px; padding: 0 0 0 24px; border-bottom: 2px solid var(--line); }
.num { font-family: var(--mono); color: var(--muted); }
.num em { display: inline-block; vertical-align: 3px; margin-left: 7px; padding: 0 4px; background: var(--raised); font: 15px/24px var(--sans); color: var(--dim); }
.select { display: flex; align-items: center; justify-content: space-between; width: 416px; height: 64px; padding: 0 16px; border: 2px solid var(--line); background: var(--raised); font-size: 28px; }
.select .icon { color: var(--dim); }
.field { width: 128px; height: 56px; padding-left: 11px; border: 2px solid var(--line); background: var(--raised); font: 24px/52px var(--mono); }
.rev { width: 56px; height: 56px; border: 2px solid var(--line); background: var(--raised); font: bold 20px/50px var(--mono); text-align: center; color: var(--dim); }
.outputs .cur { padding-bottom: 1px; font-family: var(--mono); font-size: 21px; font-weight: 700; color: var(--dim); }

/* Flight logs */
.logs { min-width: 0; background: var(--panel); border-left: 2px solid var(--line); }
.logs-head { display: flex; align-items: center; gap: 23px; height: 78px; padding: 0 32px; border-bottom: 2px solid var(--line); font-weight: 600; letter-spacing: 1.2px; color: var(--muted); }
.logs-head .icon { color: var(--dim); }
.logs-tools { height: 134px; padding: 12px 24px; border-bottom: 2px solid var(--line); display: flex; flex-direction: column; gap: 16px; }
.tools-row { display: flex; align-items: center; gap: 16px; color: var(--muted); }
.select.small { font-size: 22px; line-height: 32px; padding-bottom: 2px; color: var(--text); }
.w-level { width: 152px; }
.w-filter { width: 214px; }
.msgs { font: 20px/30px var(--mono); color: var(--dim); }
.auto { margin-left: auto; margin-right: 12px; display: flex; align-items: center; gap: 8px; font-size: 20px; line-height: 28px; color: var(--accent); }
.tool { width: 44px; height: 28px; display: flex; align-items: center; justify-content: center; }
.logs-search { display: flex; align-items: center; gap: 16px; height: 52px; padding: 0 24px 2px; border-bottom: 2px solid var(--line); font: 22px/33px var(--mono); letter-spacing: -.04px; color: var(--dim); }
.log-row { display: grid; grid-template-columns: 144px 168px 402px; padding: 0 24px; font-family: var(--mono); }
.log-cols { height: 44px; padding-bottom: 2px; border-bottom: 2px solid var(--line); background: #0c0c0c; font-size: 18px; line-height: 40px; color: var(--dim); }
.log-cols span { display: flex; align-items: center; gap: 8px; }
.log-cols .icon { color: #2c2c2c; }
.log-cols .sorted .icon { color: var(--accent); }
.log-entry { padding-top: 5px; padding-bottom: 3px; background: #0a1f14; font-size: 22px; line-height: 40px; letter-spacing: -.04px; }
.time { color: var(--dim); }
.sev { font-weight: 700; color: #05df72; }
.msg { word-break: break-all; }

/* Floating dev-tools button */
.dev-badge { position: absolute; left: 40px; bottom: 40px; width: 72px; height: 72px; padding-top: 3px; display: flex; align-items: center; justify-content: center; border-radius: 50%; background: #000; border: 2px solid #2a2a2a; box-shadow: 0 0 0 2px #141414; }
```
